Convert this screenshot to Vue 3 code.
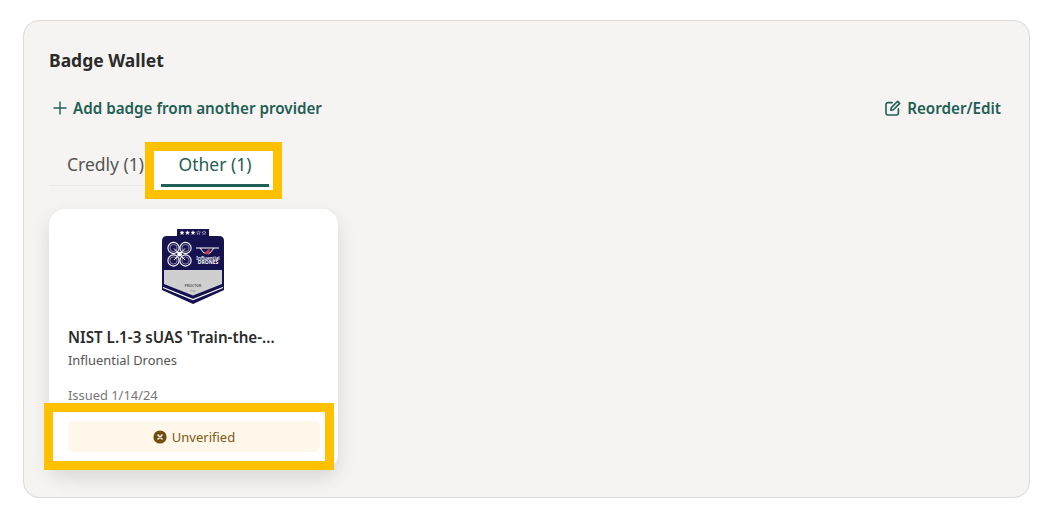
<script setup>
const stars = [0, 1, 2, 3, 4]
const starPath = 'M0-2 .6-.7 2-.6 .9.3 1.3 1.7 0 .9-1.3 1.7-.9.3-2-.6-.6-.7Z'
const rings = [
  [18.5, 20],
  [30.5, 20],
  [18.5, 32.5],
  [30.5, 32.5]
]
</script>

<template>
  <main class="page">
    <section class="panel">
      <h2 class="heading">Badge Wallet</h2>
      <div class="actions">
        <a class="action">
          <svg class="plus" viewBox="0 0 14 14" width="14" height="14"><path d="M7 .5v13M.5 7h13" fill="none" stroke="currentColor" stroke-width="1.4" /></svg>
          Add badge from another provider
        </a>
        <a class="action">
          <svg class="edit" viewBox="0 0 16 16" width="16" height="16" fill="none" stroke="currentColor" stroke-width="1.6" stroke-linecap="round" stroke-linejoin="round">
            <path d="M7.2 2.6H3a2 2 0 0 0-2 2V13a2 2 0 0 0 2 2h8.4a2 2 0 0 0 2-2V8.8" />
            <path d="M12.6 1.3 14.7 3.4 8.4 9.7 5.8 10.2 6.3 7.6Z" />
          </svg>
          Reorder/Edit
        </a>
      </div>
      <nav class="tabs">
        <span class="tab">Credly (1)</span>
        <span class="tab tab-active">
          <i class="frame frame-tab"></i>
          <span class="tab-label">Other (1)</span>
          <i class="tab-line"></i>
        </span>
      </nav>
      <article class="card">
        <svg class="badge" viewBox="0 0 76 76" width="76" height="76">
          <path d="M7 13Q7 8 12 8H22V1H54V8H64Q69 8 69 13V62L38 76 7 62Z" fill="#16124f" />
          <path d="M9 42H67V56L38 67.5 9 56Z" fill="#cfcfcf" />
          <path d="M8 59.5 38 71.5 68 59.5" fill="none" stroke="#fff" stroke-width="1.2" />
          <path
            v-for="s in stars"
            :key="s"
            :d="starPath"
            :transform="`translate(${27 + s * 5.5} 4.8)`"
            :fill="s < 3 ? '#fff' : 'none'"
            stroke="#fff"
            stroke-width=".4"
          />
          <g fill="none" stroke="#fff">
            <circle v-for="r in rings" :key="r.join()" :cx="r[0]" :cy="r[1]" r="5.6" stroke-width="1.1" />
            <circle v-for="r in rings" :key="r.join()" :cx="r[0]" :cy="r[1]" r="3.6" stroke-width=".5" />
            <path d="M19 20.5 30 32M30 20.5 19 32" stroke-width="1" />
          </g>
          <circle cx="24.5" cy="26.2" r="2.4" fill="#fff" />
          <path d="M41 20H64M45 20l4 5h6l4-5" fill="none" stroke="#fff" stroke-width="1" />
          <path d="M49 25 55 20 54 27Z" fill="#c23a4b" />
          <text x="53" y="31.5" class="logo-a">Influential</text>
          <text x="53" y="36" class="logo-b">DRONES</text>
          <text x="38" y="59" class="rank">PROCTOR</text>
          <text x="38" y="63.5" class="exp">Exp</text>
        </svg>
        <h3 class="title">NIST L.1-3 sUAS 'Train-the-...</h3>
        <p class="issuer">Influential Drones</p>
        <p class="issued">Issued 1/14/24</p>
        <div class="status-wrap">
          <i class="frame frame-status"></i>
          <div class="status">
            <svg viewBox="0 0 14 14" width="14" height="14">
              <circle cx="7" cy="7" r="6.6" fill="#6f4e0e" />
              <path d="M5 5l4 4M9 5l-4 4" stroke="#fff" stroke-width="1.5" stroke-linecap="round" />
            </svg>
            Unverified
          </div>
        </div>
      </article>
    </section>
  </main>
</template>

<style>
html, body { background: #fff; }
</style>

<style scoped>
.page {
  width: 1051px;
  height: 520px;
  padding: 20px 21px 22px 23px;
  box-sizing: border-box;
  font-family: "Noto Sans", "Open Sans", sans-serif;
  overflow: hidden;
}
.panel {
  height: 100%;
  box-sizing: border-box;
  padding: 27px 28px 0 25px;
  background: #f5f4f2;
  border: 1px solid #dcdad8;
  border-radius: 16px;
}
.heading {
  margin: 0;
  font-size: 17.5px;
  line-height: 25px;
  font-weight: 700;
  color: #2b2b2b;
}
.actions {
  margin-top: 24px;
  display: flex;
  justify-content: space-between;
  padding-left: 4px;
}
.action {
  display: flex;
  align-items: center;
  gap: 6px;
  font-size: 15.2px;
  line-height: 22px;
  font-weight: 600;
  color: #1f5f54;
}
.tabs {
  margin-top: 20px;
  width: 233px;
  height: 47px;
  box-sizing: border-box;
  display: flex;
  border-bottom: 1px solid #eceae8;
}
.tab {
  font-size: 17.5px;
  line-height: 25px;
  padding-top: 13px;
  color: #555;
  width: 112px;
  padding-left: 18px;
  box-sizing: border-box;
  white-space: nowrap;
}
.tab-active {
  position: relative;
  width: 108px;
  height: 48px;
  padding: 13px 0 0;
  text-align: center;
  color: #1f5f54;
}
.tab-label { position: relative; }
.tab-line {
  position: absolute;
  left: 0;
  right: 0;
  bottom: 0;
  height: 3px;
  background: #1f5f54;
}
.frame {
  position: absolute;
  box-sizing: border-box;
  background: #fff;
  border: 9px solid #ffc000;
}
.frame-tab { left: -16px; top: 3px; width: 137px; height: 57px; }
.card {
  margin-top: 23px;
  width: 289px;
  height: 261px;
  box-sizing: border-box;
  padding: 19px 18px 0 19px;
  background: #fff;
  border-radius: 16px;
  box-shadow: 0 8px 18px rgba(60, 50, 40, 0.14);
}
.badge { display: block; margin-left: 87px; }
.logo-a, .logo-b, .rank, .exp {
  font-family: "Noto Sans", sans-serif;
  text-anchor: middle;
}
.logo-a { font-size: 4.6px; font-weight: 600; fill: #fff; }
.logo-b { font-size: 5px; font-weight: 700; fill: #fff; }
.rank { font-size: 3.6px; font-weight: 700; fill: #666; }
.exp { font-size: 2.8px; fill: #888; }
.title {
  margin: 22px 0 0;
  font-size: 15.2px;
  line-height: 22px;
  font-weight: 600;
  color: #2b2b2b;
}
.issuer {
  margin: 2px 0 0;
  font-size: 12.9px;
  line-height: 20px;
  color: #555;
}
.issued {
  margin: 15px 0 0;
  font-size: 12.9px;
  line-height: 20px;
  color: #777;
}
.status-wrap {
  position: relative;
  margin-top: 16px;
}
.frame-status { left: -24px; top: -18px; width: 290px; height: 67px; }
.status {
  position: relative;
  height: 31px;
  display: flex;
  align-items: center;
  justify-content: center;
  gap: 5px;
  background: #fff7e9;
  border-radius: 6px;
  font-size: 13px;
  color: #7a5a14;
}
</style>
